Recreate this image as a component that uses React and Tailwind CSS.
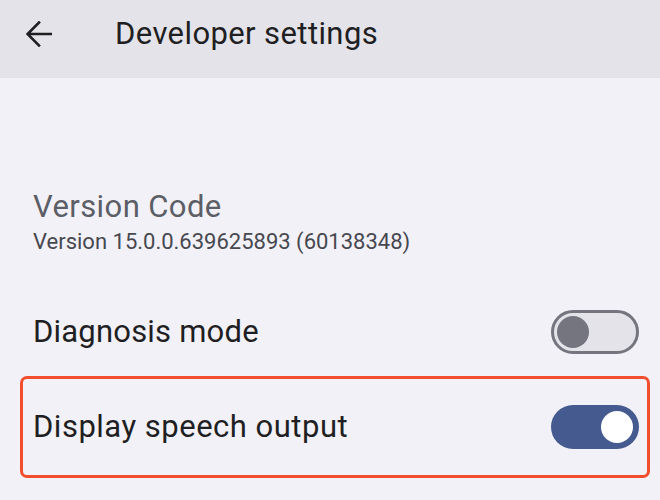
import React, { useState } from 'react';

const Toggle = ({ on, onClick }) => {
  if (on) {
    return (
      <button
        type="button"
        onClick={onClick}
        className="w-[88px] h-[44px] rounded-full bg-[#455a8f] flex items-center justify-end pr-[6px] shrink-0"
      >
        <span className="w-[32px] h-[32px] rounded-full bg-white" />
      </button>
    );
  }
  return (
    <button
      type="button"
      onClick={onClick}
      className="w-[88px] h-[44px] rounded-full bg-[#e3e3e9] border-[3px] border-[#74757e] flex items-center pl-[3px] shrink-0"
    >
      <span className="w-[32px] h-[32px] rounded-full bg-[#74757e]" />
    </button>
  );
};

const App = () => {
  const [diagnosis, setDiagnosis] = useState(false);
  const [speech, setSpeech] = useState(true);

  return (
    <div className="w-[660px] h-[500px] overflow-hidden bg-[#f2f1f7] font-['Roboto',sans-serif]">
      <div className="h-[78px] bg-[#e3e3e9] flex items-center pb-[10px]">
        <div className="w-[115px] pl-[26px]">
          <svg width="26" height="26" viewBox="0 0 26 26" fill="none">
            <path d="M25 13H2.5M13 1.5L1.5 13L13 24.5" stroke="#1f1f23" strokeWidth="2.6" strokeLinecap="square" />
          </svg>
        </div>
        <h1 className="text-[31px] leading-[38px] tracking-[0.4px] text-[#1f1f23]">Developer settings</h1>
      </div>

      <div className="pl-[20px] pr-[10px]">
        <div className="pl-[13px] pt-[110px]">
          <div className="text-[31px] leading-[38px] tracking-[0.4px] text-[#5c5e66]">Version Code</div>
          <div className="text-[22px] leading-[28px] mt-[2px] text-[#47484f]">Version 15.0.0.639625893 (60138348)</div>
        </div>

        <div className="h-[80px] mt-[36px] pl-[13px] pr-[11px] flex items-center justify-between">
          <span className="text-[31px] leading-[38px] tracking-[0.2px] text-[#1f1f23]">Diagnosis mode</span>
          <Toggle on={diagnosis} onClick={() => setDiagnosis(!diagnosis)} />
        </div>

        <div className="h-[102px] mt-[4px] border-[3px] border-[#f24e2d] rounded-[7px] pl-[10px] pr-[8px] flex items-center justify-between">
          <span className="text-[31px] leading-[38px] tracking-[0.5px] text-[#1f1f23]">Display speech output</span>
          <Toggle on={speech} onClick={() => setSpeech(!speech)} />
        </div>
      </div>
    </div>
  );
};

export default App;
